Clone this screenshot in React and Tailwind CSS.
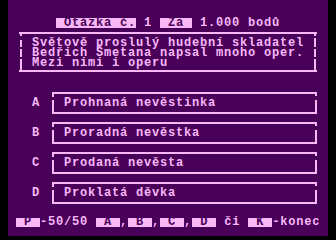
const answers = [
  ["A", "Prohnaná nevěstinka"],
  ["B", "Proradná nevěstka"],
  ["C", "Prodaná nevěsta"],
  ["D", "Proklatá děvka"],
];

// inverse video chunk
function Inv({ children, short }) {
  return (
    <span
      className={`inline-block align-top bg-[#f8b8f8] text-[#480058] ${
        short ? "h-[9px] leading-[9px]" : "h-[10px] leading-[10px]"
      }`}
    >
      {children}
    </span>
  );
}

function AnswerBox({ letter, text, first }) {
  return (
    <div className={`flex ${first ? "mt-[20px]" : "mt-[8px]"}`}>
      <div className="w-[44px] pl-[24px] pt-[6px]">{letter}</div>
      <div className="w-[265px] flex border-y-2 border-[#f8b8f8]">
        {/* left side: corner tick + bar */}
        <div className="w-[2px] flex flex-col">
          <div className="h-[3px] bg-[#f8b8f8]" />
          <div className="h-[12px] mt-[3px] bg-[#f8b8f8]" />
        </div>
        <div className="flex-1 pl-[10px] pt-[4px] pb-[4px]">{text}</div>
        <div className="w-[2px] flex flex-col">
          <div className="h-[2px] bg-[#f8b8f8]" />
          <div className="h-[12px] mt-[4px] bg-[#f8b8f8]" />
        </div>
      </div>
    </div>
  );
}

export default function App() {
  return (
    <div className="w-[336px] h-[240px] bg-black flex px-2">
      <div className="w-[320px] h-[236px] bg-[#480058] text-[#f8b8f8] flex flex-col font-['Liberation_Mono',monospace] font-bold text-[12px] tracking-[0.8px] leading-[10px] whitespace-pre">
        {/* header */}
        <div className="mt-[18px] ml-[48px] h-[10px]">
          <Inv> Otázka č.</Inv> 1 <Inv> Za </Inv> 1.000 bodů
        </div>

        {/* question */}
        <div className="mt-[4px] ml-[11px] w-[298px] flex border-y-2 border-[#f8b8f8]">
          <div className="w-[2px] ml-[1px] flex flex-col">
            <div className="h-[2px] bg-[#f8b8f8]" />
            <div className="h-[7px] mt-[4px] bg-[#f8b8f8]" />
            <div className="h-[8px] mt-[2px] bg-[#f8b8f8]" />
            <div className="h-[11px] mt-[2px] bg-[#f8b8f8]" />
          </div>
          <div className="flex-1 pl-[10px] pt-[4px] pb-[2px]">
            <div>Světově proslulý hudební skladatel</div>
            <div>Bedřich Šmetana napsal mnoho oper.</div>
            <div>Mezi nimi i operu</div>
          </div>
          <div className="w-[2px] mr-[1px] flex flex-col">
            <div className="h-[2px] bg-[#f8b8f8]" />
            <div className="h-[9px] mt-[2px] bg-[#f8b8f8]" />
            <div className="h-[8px] mt-[2px] bg-[#f8b8f8]" />
            <div className="h-[11px] mt-[2px] bg-[#f8b8f8]" />
          </div>
        </div>

        {answers.map(([l, t], i) => (
          <AnswerBox key={l} letter={l} text={t} first={i === 0} />
        ))}

        {/* footer keys */}
        <div className="mt-[14px] ml-[8px] h-[10px] leading-[9px]">
          <Inv short> P </Inv>-50/50 <Inv short> A </Inv>,<Inv short> B </Inv>,
          <Inv short> C </Inv>,<Inv short> D </Inv> či <Inv short> K </Inv>-konec
        </div>
      </div>
    </div>
  );
}
